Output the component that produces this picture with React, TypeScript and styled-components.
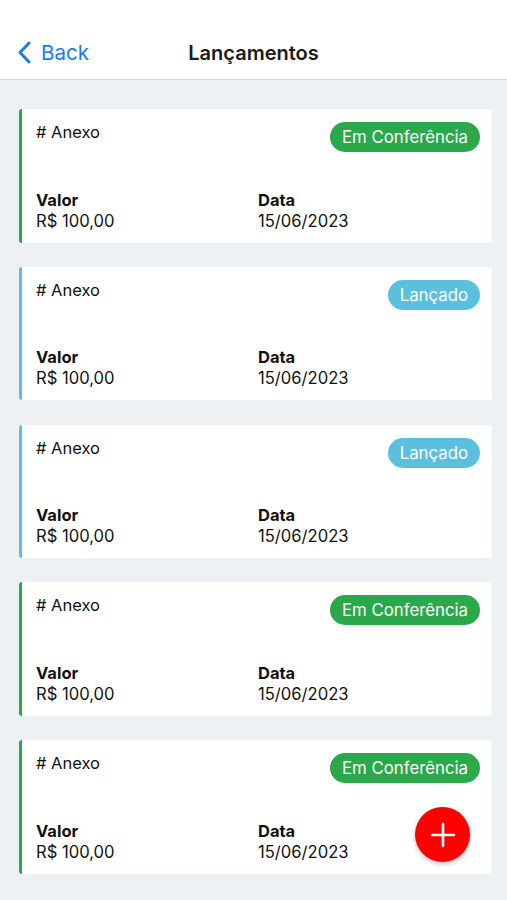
import React from "react";
import styled, { createGlobalStyle } from "styled-components";

const GlobalStyle = createGlobalStyle`
  html, body { margin: 0; padding: 0; background: #eef1f4; }
  body { font-family: Inter, "Noto Sans", sans-serif; color: #111; -webkit-font-smoothing: antialiased; }
  * { box-sizing: border-box; }
`;

const Screen = styled.div`
  min-height: 900px;
  background: #eef1f4;
`;

const Header = styled.header`
  height: 80px;
  background: #fff;
  border-bottom: 1px solid #d9dadc;
  display: grid;
  grid-template-columns: 1fr auto 1fr;
  align-items: center;
  padding: 26px 17px 0;
`;

const BackButton = styled.button`
  display: flex;
  align-items: center;
  gap: 10px;
  background: none;
  border: none;
  padding: 0;
  color: #1b7cf2;
  font-family: inherit;
  font-size: 20.5px;
  cursor: pointer;
  justify-self: start;
`;

const Title = styled.h1`
  margin: 0;
  font-size: 20px;
  font-weight: 600;
  color: #1a1a1a;
`;

const List = styled.main`
  display: flex;
  flex-direction: column;
  gap: 24.25px;
  padding: 29px 15px 24px 19px;
`;

const Card = styled.div<{ $accent: string }>`
  height: 133.5px;
  background: #fff;
  border-left: 3px solid ${(p) => p.$accent};
  border-radius: 3px;
  display: flex;
  flex-direction: column;
  justify-content: space-between;
  padding: 13px 12px 11px 14px;
`;

const TopRow = styled.div`
  display: flex;
  justify-content: space-between;
  align-items: flex-start;
`;

const Attachment = styled.span`
  font-size: 16.5px;
  line-height: 21px;
  color: #111;
`;

const Badge = styled.span<{ $bg: string }>`
  height: 30px;
  border-radius: 15px;
  background: ${(p) => p.$bg};
  color: #fff;
  font-size: 16.8px;
  line-height: 30px;
  padding: 0 12px;
`;

const Fields = styled.div`
  display: grid;
  grid-template-columns: 1fr 1fr;
`;

const Field = styled.div`
  display: flex;
  flex-direction: column;
`;

const Label = styled.span`
  font-size: 16.5px;
  font-weight: 700;
  line-height: 21px;
  color: #111;
`;

const Value = styled.span`
  font-size: 16.6px;
  line-height: 21px;
  color: #111;
`;

const Fab = styled.button`
  position: fixed;
  right: 37px;
  bottom: 38px;
  width: 55px;
  height: 55px;
  border-radius: 50%;
  border: none;
  background: #fe0000;
  box-shadow: 0 2px 5px rgba(0, 0, 0, 0.25);
  display: flex;
  align-items: center;
  justify-content: center;
  cursor: pointer;
  padding: 0;
`;

type Status = "conf" | "lanc";

const STATUS = {
  conf: { label: "Em Conferência", color: "#2aa84a" },
  lanc: { label: "Lançado", color: "#5bc0de" },
};

const items: Status[] = ["conf", "lanc", "lanc", "conf", "conf"];

export default function App() {
  return (
    <Screen>
      <GlobalStyle />
      <Header>
        <BackButton>
          <svg width="14" height="23" viewBox="0 0 14 23" fill="none">
            <path d="M12 2L3 11.5L12 21" stroke="#1b7cf2" strokeWidth="3" strokeLinecap="round" strokeLinejoin="round" />
          </svg>
          Back
        </BackButton>
        <Title>Lançamentos</Title>
        <span />
      </Header>
      <List>
        {items.map((s, i) => (
          <Card key={i} $accent={STATUS[s].color}>
            <TopRow>
              <Attachment># Anexo</Attachment>
              <Badge $bg={STATUS[s].color}>{STATUS[s].label}</Badge>
            </TopRow>
            <Fields>
              <Field>
                <Label>Valor</Label>
                <Value>R$ 100,00</Value>
              </Field>
              <Field>
                <Label>Data</Label>
                <Value>15/06/2023</Value>
              </Field>
            </Fields>
          </Card>
        ))}
      </List>
      <Fab aria-label="Adicionar">
        <svg width="26" height="26" viewBox="0 0 26 26">
          <path d="M13 2V24M2 13H24" stroke="#fff" strokeWidth="2.6" strokeLinecap="round" />
        </svg>
      </Fab>
    </Screen>
  );
}
